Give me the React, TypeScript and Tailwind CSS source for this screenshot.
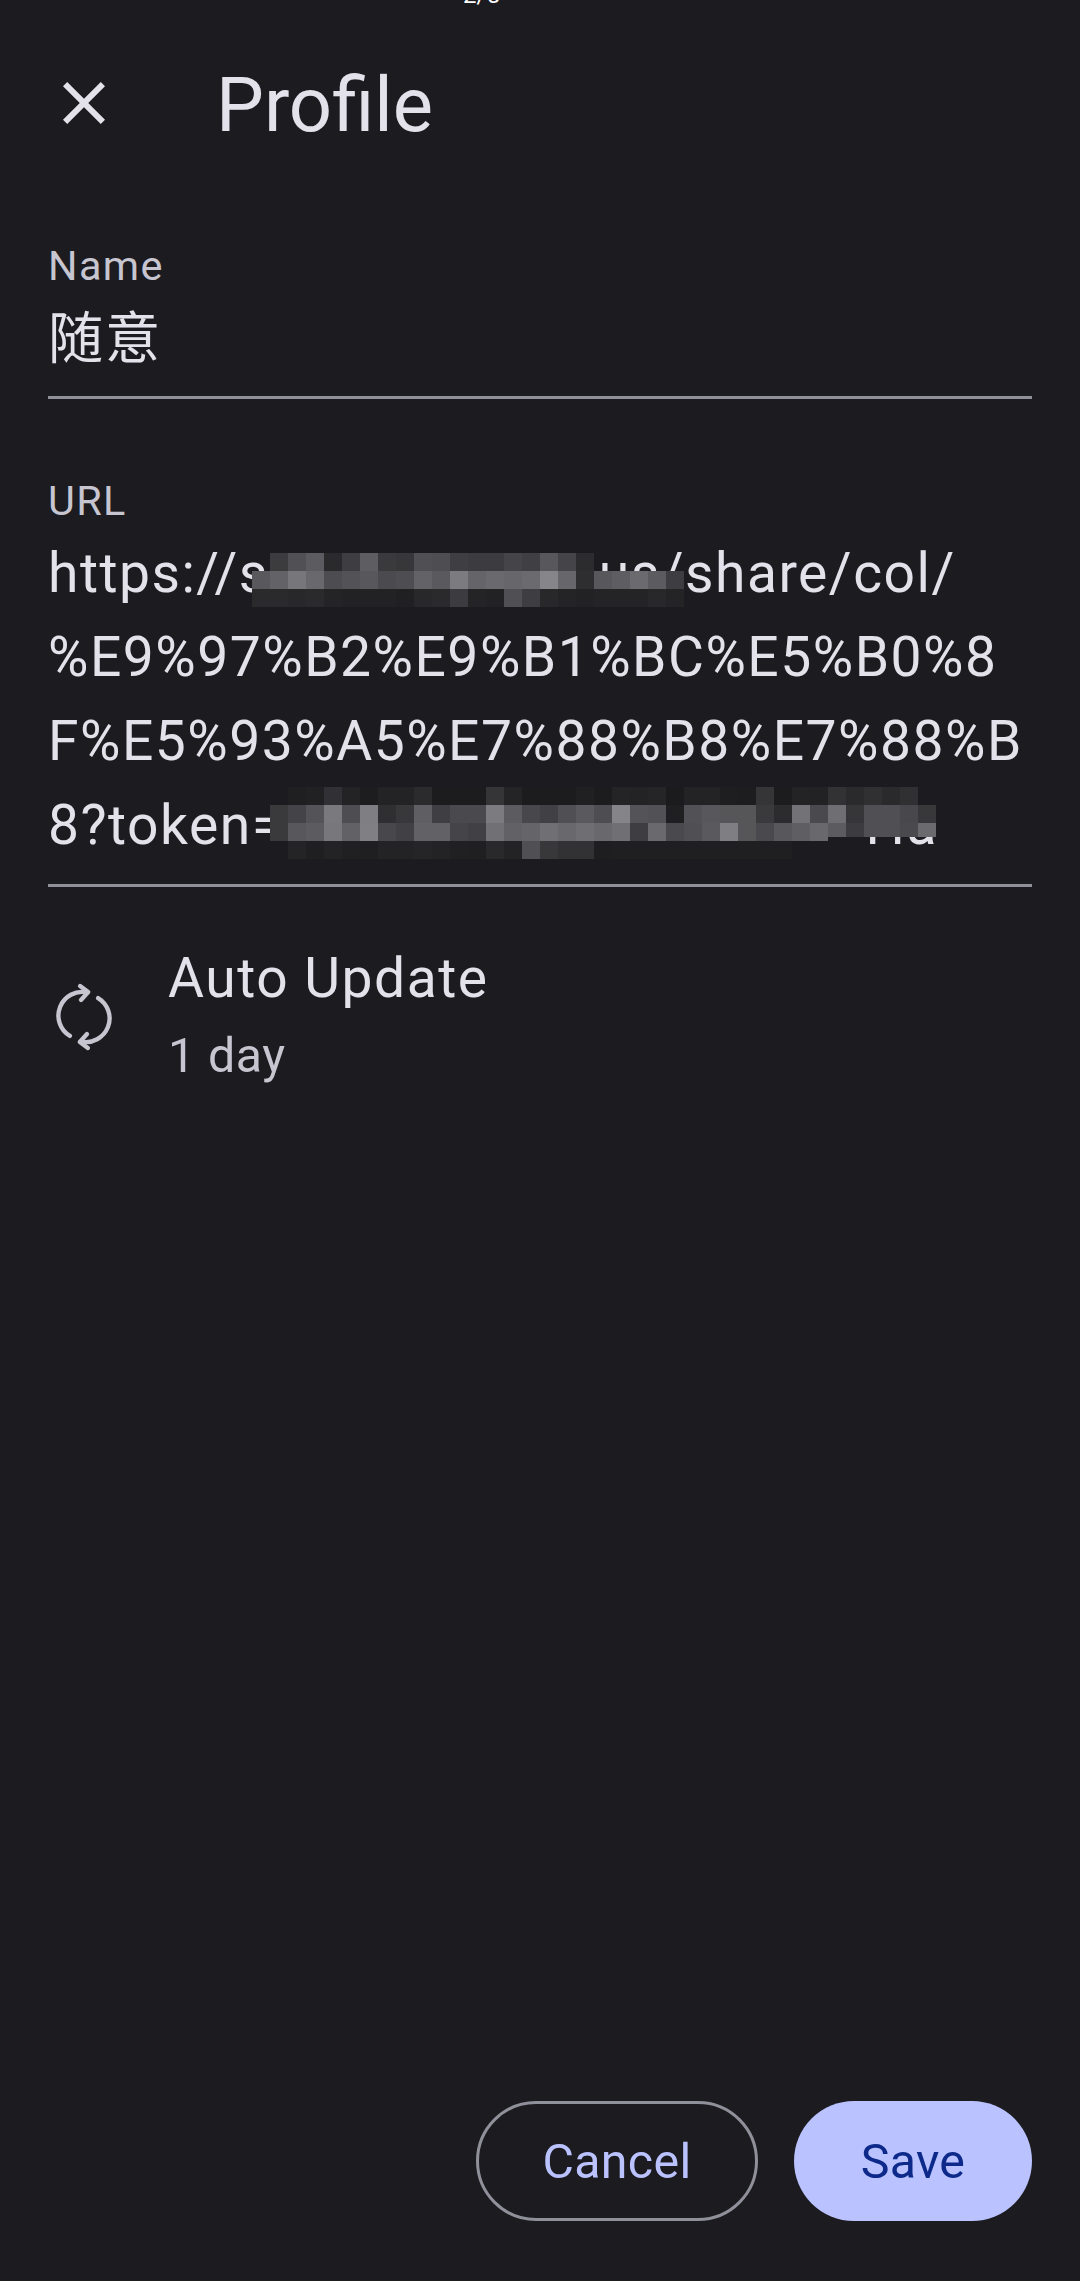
type MosaicRow = { y: number; x: number; h?: number; cells: string[] };

const firstLineMosaic: MosaicRow[] = [
  { y: 0, x: 270, cells: ['#3c3c3f', '#515155', '#5c5c60', '#2a2a2d', '#3e3e42', '#5e5e62', '#3a3a3d', '#37373a', '#505054', '#4e4e52', '#3f3f43', '#3c3c40', '#3c3c40', '#454549', '#404044', '#58585c', '#454549', '#2c2c2f'] },
  { y: 18, x: 252, cells: ['#59595d', '#636367', '#77777b', '#69696d', '#4d4d51', '#535357', '#58585c', '#4b4b4f', '#4e4e52', '#636367', '#5a5a5e', '#7c7c80', '#656569', '#6a6a6e', '#67676b', '#6b6b6f', '#86868a', '#67676b', '#2e2e31', '#58585c', '#5e5e62', '#6b6b6f', '#5c5c60', '#3e3e42'] },
  { y: 36, x: 252, cells: ['#2a2a2d', '#2a2a2d', '#28282b', '#2a2a2d', '#242427', '#222225', '#222225', '#222225', '#202023', '#28282b', '#2a2a2d', '#3c3c40', '#242427', '#222225', '#505054', '#3e3e42', '#28282b', '#242427', '#222225', '#242427', '#242427', '#242427', '#28282b', '#242427'] },
];

const lastLineMosaic: MosaicRow[] = [
  { y: 0, x: 288, cells: ['#1f1f22', '#212124', '#313135', '#232326', '#1d1d20', '#232326', '#232326', '#2b2b2e', '#1c1c1f', '#1c1c1f', '#1c1c1f', '#353538', '#242427', '#1c1c1f', '#1c1c1f', '#1c1c1f', '#202023', '#1c1c1f', '#242427', '#232326', '#252528', '#1b1b1e', '#232326', '#232326', '#1e1e21', '#1d1d20', '#353538', '#1c1c1f', '#232326', '#222225', '#323235', '#2a2a2d', '#303033', '#2a2a2d', '#303033'] },
  { y: 18, x: 270, cells: ['#3a3a3d', '#444448', '#545458', '#7a7a7e', '#4e4e52', '#7f7f83', '#2f2f32', '#38383b', '#5f5f63', '#3f3f43', '#4a4a4e', '#4a4a4e', '#7c7c80', '#5c5c60', '#48484c', '#414145', '#505054', '#5a5a5e', '#4e4e52', '#858589', '#545458', '#525256', '#1f1f22', '#525256', '#58585c', '#565659', '#565659', '#3a3a3d', '#2c2c2f', '#737377', '#4a4a4e', '#6f6f73', '#363639', '#505054', '#505054', '#48484c', '#38383b'] },
  { y: 36, x: 270, cells: ['#3a3a3d', '#58585c', '#5c5c60', '#78787c', '#626266', '#808084', '#48484c', '#414145', '#626266', '#626266', '#454549', '#414145', '#717175', '#626266', '#656569', '#707074', '#69696d', '#6f6f73', '#69696d', '#707074', '#3e3e42', '#6a6a6e', '#4a4a4e', '#505054', '#5a5a5e', '#7f7f83', '#565659', '#4a4a4e', '#58585c', '#5f5f63', '#69696d'] },
  // right end of this row stops a little higher, the letters show below it
  { y: 36, x: 828, h: 14, cells: ['#5c5c60', '#3c3c40', '#505054', '#505054', '#4a4a4e', '#6b6b6f'] },
  { y: 54, x: 288, cells: ['#242427', '#1f1f22', '#232326', '#202023', '#1f1f22', '#232326', '#232326', '#252528', '#232326', '#202023', '#1f1f22', '#29292c', '#232326', '#505054', '#38383b', '#323235', '#323235', '#1e1e21', '#1f1f22', '#1f1f22', '#1f1f22', '#1f1f22', '#1f1f22', '#1f1f22', '#1f1f22', '#1f1f22', '#1f1f22', '#1f1f22'] },
];

// pixelated patch hiding part of the url
function Mosaic({ rows, className }: { rows: MosaicRow[]; className: string }) {
  return (
    <svg className={className} width="720" height="72" viewBox="252 0 720 72" shapeRendering="crispEdges">
      {rows.map((row) =>
        row.cells.map((fill, i) => (
          <rect key={`${row.y}-${row.x}-${i}`} x={row.x + i * 18} y={row.y} width="18" height={row.h ?? 18} fill={fill} />
        ))
      )}
    </svg>
  );
}

function CloseIcon() {
  return (
    <svg width="72" height="72" viewBox="0 0 24 24" fill="#e3e1e9">
      <path d="M19 6.41 17.59 5 12 10.59 6.41 5 5 6.41 10.59 12 5 17.59 6.41 19 12 13.41 17.59 19 19 17.59 13.41 12z" />
    </svg>
  );
}

function SyncIcon() {
  return (
    <svg width="72" height="72" viewBox="0 0 24 24" fill="none" stroke="#c6c5d0" strokeWidth="1.45" strokeLinecap="round" strokeLinejoin="round">
      <path d="M7.3 18.3A7.9 7.9 0 0 1 13 3.8" />
      <path d="M10.7 1.7 13.4 3.7 11 6.3" />
      <path d="M16.7 5.7A7.9 7.9 0 0 1 11 20.2" />
      <path d="M13.3 22.3 10.6 20.3 13 17.7" />
    </svg>
  );
}

export default function App() {
  return (
    <div className="relative flex h-[2281px] w-[1080px] flex-col overflow-hidden bg-[#1b1b20] font-[Roboto,'Noto_Sans_CJK_SC',sans-serif]">
      {/* top of the page indicator, cut off by the screen edge */}
      <div className="absolute left-[463px] top-[-17px] text-[24px] leading-[24px] text-white">2/5</div>

      {/* Header */}
      <header className="flex h-[206px] shrink-0 items-center pl-12">
        <CloseIcon />
        <h1 className="ml-24 pt-[5px] text-[75.9px] leading-[96px] text-[#e3e1e9]">Profile</h1>
      </header>

      {/* Name */}
      <div className="mx-12 mt-8 border-b-[3px] border-[#90909a] pb-[15px]">
        <div className="text-[41.4px] leading-[56px] tracking-[1.38px] text-[#c6c5d0]">Name</div>
        <div className="mt-[3px] text-[55.2px] leading-[84px] tracking-[1.7px] text-[#e3e1e9]">随意</div>
      </div>

      {/* URL */}
      <div className="relative mx-12 mt-[74px] border-b-[3px] border-[#90909a] pb-[17px]">
        <div className="text-[41.4px] leading-[56px] tracking-[1.38px] text-[#c6c5d0]">URL</div>
        <div className="mt-[2px] whitespace-nowrap text-[55.2px] leading-[84px] tracking-[1.5px] text-[#e3e1e9]">
          <div>
            https://s<span className="inline-block w-[330px]" />us/share/col/
          </div>
          <div>%E9%97%B2%E9%B1%BC%E5%B0%8</div>
          <div>F%E5%93%A5%E7%88%B8%E7%88%B</div>
          <div>
            8?token=<span className="inline-block w-[582px]" />Ha
          </div>
        </div>
        <Mosaic rows={firstLineMosaic} className="absolute left-[204px] top-[80px]" />
        <Mosaic rows={lastLineMosaic} className="absolute left-[204px] top-[314px]" />
      </div>

      {/* Auto Update */}
      <div className="mx-12 mt-[55px] flex items-start gap-12">
        <div className="mt-[39px]">
          <SyncIcon />
        </div>
        <div>
          <div className="text-[55.2px] leading-[72px] tracking-[1.5px] text-[#e3e1e9]">Auto Update</div>
          <div className="mt-3 text-[48.3px] leading-[60px] tracking-[0.5px] text-[#c6c5d0]">1 day</div>
        </div>
      </div>

      {/* Actions */}
      <div className="mt-auto flex justify-end gap-9 px-12 pb-[60px]">
        <button className="h-[120px] w-[282px] rounded-full border-[3px] border-[#90909a] pt-[2px] text-[48.3px] tracking-[0.35px] text-[#bac3ff]">
          Cancel
        </button>
        <button className="h-[120px] w-[238px] rounded-full bg-[#bac3ff] pt-[2px] text-[48.3px] tracking-[0.35px] text-[#0d2a8a]">
          Save
        </button>
      </div>
    </div>
  );
}
